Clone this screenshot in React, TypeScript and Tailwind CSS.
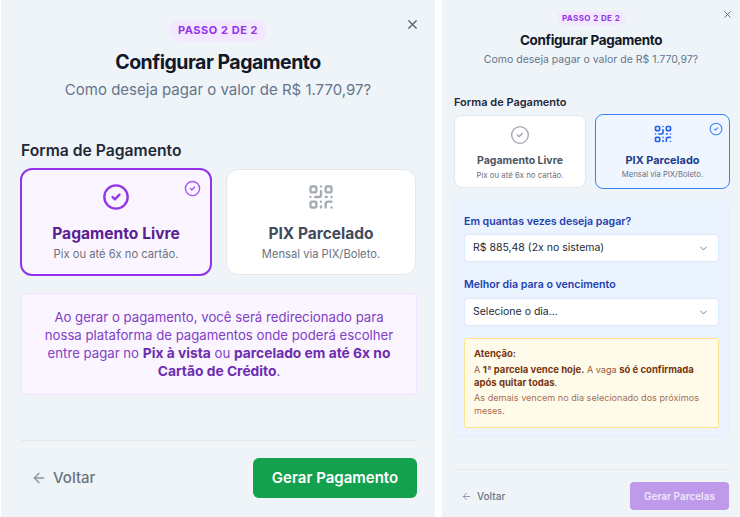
import { X, ArrowLeft, ChevronDown, QrCode } from "lucide-react";

function CheckCircle({ size, stroke, color, className = "" }: { size: number; stroke: number; color: string; className?: string }) {
  return (
    <svg width={size} height={size} viewBox="0 0 24 24" fill="none" stroke={color} strokeWidth={stroke} strokeLinecap="round" strokeLinejoin="round" className={className}>
      <circle cx="12" cy="12" r="10" />
      <path d="m9 12 2 2 4-4" />
    </svg>
  );
}

export default function App() {
  return (
    <div className="w-[740px] h-[517px] overflow-hidden bg-white flex font-['Inter',sans-serif]">
      {/* Left panel */}
      <div className="ml-px w-[434px] h-[517px] bg-[#eff4f9] px-[20px] flex flex-col relative">
        <X className="absolute top-[17px] right-[15px] text-[#566070]" size={15} strokeWidth={2} />
        <div className="flex flex-col items-center pt-[20px]">
          <span className="h-[21px] w-[98px] rounded-full bg-[#f3e8ff] text-[#9333ea] text-[11px] font-bold tracking-[0.55px] flex items-center justify-center">PASSO 2 DE 2</span>
          <h1 className="mt-[9px] text-[19.5px] leading-[24px] font-bold text-[#111827] tracking-[-0.5px]">Configurar Pagamento</h1>
          <p className="mt-[4px] text-[15px] leading-[24px] text-[#64748b]">Como deseja pagar o valor de R$ 1.770,97?</p>
        </div>
        <h2 className="mt-[39px] text-[15.7px] leading-[20px] font-semibold text-[#1f2937]">Forma de Pagamento</h2>
        <div className="mt-[7px] flex gap-[14px] items-center -ml-px">
          <div className="relative shrink-0 w-[192px] h-[108px] rounded-[12px] border-2 border-[#9333ea] bg-[#faf5ff] flex flex-col items-center pt-[13px]">
            <CheckCircle size={28} stroke={2} color="#9333ea" />
            <CheckCircle size={17} stroke={2} color="#a855f7" className="absolute top-[10px] right-[9px]" />
            <span className="mt-[13px] text-[15.6px] leading-[20px] font-bold text-[#5b2191]">Pagamento Livre</span>
            <span className="mt-[2px] text-[11.2px] leading-[16px] text-[#6b7280]">Pix ou até 6x no cartão.</span>
          </div>
          <div className="shrink-0 w-[190px] h-[106px] rounded-[12px] border border-[#e5e7eb] bg-white flex flex-col items-center pt-[13px]">
            <QrCode size={28} strokeWidth={2} className="text-[#a5abb5]" />
            <span className="mt-[13px] text-[15.5px] leading-[20px] font-bold text-[#414b5a]">PIX Parcelado</span>
            <span className="mt-[2px] text-[11.2px] leading-[16px] text-[#6b7280]">Mensal via PIX/Boleto.</span>
          </div>
        </div>
        <div className="mt-[17px] w-[396px] h-[102px] rounded-[4px] border border-[#f0e3ff] bg-[#faf5ff] flex items-center justify-center text-center text-[13.2px] leading-[18px] text-[#8040c4] px-[16px]">
          <p>Ao gerar o pagamento, você será redirecionado para nossa plataforma de pagamentos onde poderá escolher entre pagar no <b className="font-bold text-[13.8px] text-[#6d2db0]">Pix à vista</b> ou <b className="font-bold text-[13.8px] text-[#6d2db0]">parcelado em até 6x no Cartão de Crédito</b>.</p>
        </div>
        <div className="mt-[45px] w-[396px] border-t border-[#e5e7eb]" />
        <div className="mt-[17px] w-[396px] flex items-center justify-between">
          <div className="flex items-center gap-[6px] pl-[10px] text-[#6b7280] text-[15px] font-medium">
            <ArrowLeft size={16} strokeWidth={2} className="text-[#8a92a0]" />
            <span>Voltar</span>
          </div>
          <div className="w-[164px] h-[40px] rounded-[6px] bg-[#13a150] text-white text-[15px] font-semibold flex items-center justify-center">Gerar Pagamento</div>
        </div>
      </div>

      {/* Right panel */}
      <div className="ml-[7px] w-[298px] h-[517px] bg-[#eff4f9] px-[12px] flex flex-col relative">
        <X className="absolute top-[9px] right-[7px] text-[#566070]" size={11} strokeWidth={2} />
        <div className="flex flex-col items-center pt-[11px]">
          <span className="h-[14px] w-[69px] rounded-full bg-[#f3e8ff] text-[#9333ea] text-[8px] font-bold tracking-[0.4px] flex items-center justify-center">PASSO 2 DE 2</span>
          <h1 className="mt-[6px] text-[13.5px] leading-[18px] font-bold text-[#111827] tracking-[-0.35px]">Configurar Pagamento</h1>
          <p className="mt-[3px] text-[10.5px] leading-[16px] text-[#64748b]">Como deseja pagar o valor de R$ 1.770,97?</p>
        </div>
        <h2 className="mt-[27px] text-[11px] leading-[14px] font-semibold text-[#1f2937]">Forma de Pagamento</h2>
        <div className="mt-[5px] flex gap-[9px] items-center">
          <div className="shrink-0 w-[132px] h-[73px] rounded-[8px] border border-[#e5e7eb] bg-white flex flex-col items-center pt-[9px]">
            <CheckCircle size={20} stroke={1.6} color="#9ca3af" />
            <span className="mt-[9px] text-[10.5px] leading-[14px] font-bold text-[#4b5563]">Pagamento Livre</span>
            <span className="mt-[2px] text-[7.8px] leading-[11px] text-[#6b7280]">Pix ou até 6x no cartão.</span>
          </div>
          <div className="relative shrink-0 w-[135px] h-[75px] rounded-[8px] border-[1.5px] border-[#3b82f6] bg-[#eff6ff] flex flex-col items-center pt-[9px]">
            <QrCode size={20} strokeWidth={2} className="text-[#2563eb]" />
            <CheckCircle size={14} stroke={1.8} color="#3b82f6" className="absolute top-[7px] right-[6px]" />
            <span className="mt-[9px] text-[10.9px] leading-[14px] font-bold text-[#1e3a8a]">PIX Parcelado</span>
            <span className="mt-[2px] text-[7.7px] leading-[11px] text-[#6b7280]">Mensal via PIX/Boleto.</span>
          </div>
        </div>
        <div className="mt-[12px] w-[275px] h-[236px] rounded-[6px] border border-[#e4f0fd] bg-[#eaf3fe] px-[9px] pt-[12px]">
          <div className="text-[10.6px] leading-[16px] font-semibold text-[#1e40af]">Em quantas vezes deseja pagar?</div>
          <div className="mt-[4px] h-[28px] rounded-[4px] border border-[#dbeafe] bg-white flex items-center justify-between pl-[8px] pr-[9px] text-[10.5px] text-[#1f2937]">
            <span>R$ 885,48 (2x no sistema)</span>
            <ChevronDown size={11} className="text-[#6b7280]" />
          </div>
          <div className="mt-[15px] text-[10.6px] leading-[16px] font-semibold text-[#1e40af]">Melhor dia para o vencimento</div>
          <div className="mt-[5px] h-[28px] rounded-[4px] border border-[#dbeafe] bg-white flex items-center justify-between pl-[8px] pr-[9px] text-[10.5px] text-[#1f2937]">
            <span>Selecione o dia...</span>
            <ChevronDown size={11} className="text-[#6b7280]" />
          </div>
          <div className="mt-[12px] h-[90px] rounded-[3px] border border-[#fde68a] bg-[#fffbeb] pl-[9px] pr-[12px] pt-[8px] text-[9.1px] leading-[13.5px] text-[#9a5a35]">
            <p className="font-bold text-[9.5px] text-[#78350f]">Atenção:</p>
            <p className="mt-[2px]">A <b className="font-bold text-[9.5px] text-[#78350f]">1ª parcela vence hoje.</b> A vaga <b className="font-bold text-[9.5px] text-[#78350f]">só é confirmada após quitar todas</b>.</p>
            <p className="mt-[1px] text-[#a66f52]">As demais vencem no dia selecionado dos próximos meses.</p>
          </div>
        </div>
        <div className="mt-[32px] w-[275px] border-t border-[#e5e7eb]" />
        <div className="mt-[12px] w-[275px] flex items-center justify-between">
          <div className="flex items-center gap-[5px] pl-[7px] text-[#6b7280] text-[10px] font-medium">
            <ArrowLeft size={11} strokeWidth={2} className="text-[#8a92a0]" />
            <span>Voltar</span>
          </div>
          <div className="w-[99px] h-[28px] rounded-[4px] bg-[#c09aea] text-[#eee6fa] text-[10px] font-semibold flex items-center justify-center">Gerar Parcelas</div>
        </div>
      </div>
    </div>
  );
}
